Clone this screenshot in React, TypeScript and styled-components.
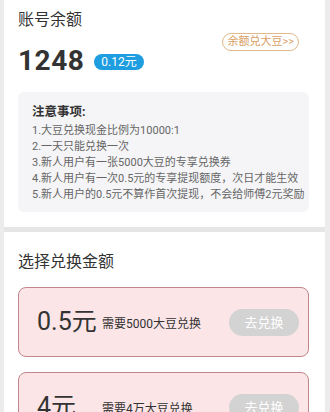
import styled, { createGlobalStyle } from "styled-components";

const GlobalStyle = createGlobalStyle`
  html, body {
    margin: 0;
    padding: 0;
    height: 412px;
    overflow: hidden;
    background: #ececec;
    font-family: Roboto, "Noto Sans CJK SC", sans-serif;
  }
`;

const notes = [
  "1.大豆兑换现金比例为10000:1",
  "2.一天只能兑换一次",
  "3.新人用户有一张5000大豆的专享兑换券",
  "4.新人用户有一次0.5元的专享提现额度，次日才能生效",
  "5.新人用户的0.5元不算作首次提现，不会给师傅2元奖励",
];

const options = [
  { amount: "0.5元", need: "需要5000大豆兑换" },
  { amount: "4元", need: "需要4万大豆兑换" },
];

const App = () => {
  return (
    <>
      <GlobalStyle />
      <Page>
        <Panel>
          <Title>账号余额</Title>
          <BalanceRow>
            <Balance>1248</Balance>
            <Badge>0.12元</Badge>
            <SwapLink>余额兑大豆&gt;&gt;</SwapLink>
          </BalanceRow>
          <NoteBox>
            <NoteTitle>注意事项:</NoteTitle>
            {notes.map((n) => (
              <NoteLine key={n}>{n}</NoteLine>
            ))}
          </NoteBox>
        </Panel>
        <Divider />
        <Panel>
          <SectionTitle>选择兑换金额</SectionTitle>
          <OptionList>
            {options.map((o) => (
              <OptionCard key={o.amount}>
                <Amount>{o.amount}</Amount>
                <Need>{o.need}</Need>
                <Spacer />
                <ExchangeBtn>去兑换</ExchangeBtn>
              </OptionCard>
            ))}
          </OptionList>
        </Panel>
      </Page>
    </>
  );
};

const Page = styled.div`
  margin: 0 5px 0 4px;
  min-height: 412px;
  background: #fff;
`;

const Panel = styled.div`
  background: #fff;
  padding: 8px 16px 0 14px;
`;

const Title = styled.div`
  font-size: 16px;
  line-height: 24px;
  color: #333;
`;

const BalanceRow = styled.div`
  display: flex;
  align-items: center;
  margin-top: 14px;
  position: relative;
`;

const Balance = styled.div`
  font-size: 28px;
  font-weight: 700;
  color: #333;
  line-height: 30px;
  letter-spacing: 0.5px;
`;

const Badge = styled.div`
  margin-left: 10px;
  background: #1e9de0;
  color: #fff;
  font-size: 12px;
  line-height: 16px;
  padding: 0 7px;
  border-radius: 9px;
  margin-top: 1px;
`;

const Spacer = styled.div`
  flex: 1;
`;

const SwapLink = styled.div`
  position: absolute;
  right: 10px;
  top: -13px;
  border: 1px solid #e2b98a;
  color: #d9a066;
  font-size: 11px;
  line-height: 16px;
  padding: 0 4px;
  border-radius: 10px;
`;

const NoteBox = styled.div`
  margin-top: 16px;
  margin-bottom: 15px;
  background: #f5f5f7;
  border-radius: 6px;
  padding: 10px 14px 9px;
  display: flex;
  flex-direction: column;
`;

const NoteTitle = styled.div`
  font-size: 12.5px;
  font-weight: 700;
  color: #333;
  line-height: 19px;
  margin-bottom: 2px;
`;

const NoteLine = styled.div`
  font-size: 11px;
  color: #666;
  line-height: 16px;
  white-space: nowrap;
`;

const Divider = styled.div`
  height: 5px;
  background: #e6e6e6;
`;

const SectionTitle = styled.div`
  font-size: 16px;
  line-height: 24px;
  color: #333;
  margin-top: 10px;
`;

const OptionList = styled.div`
  display: flex;
  flex-direction: column;
  gap: 15px;
  margin-top: 13px;
`;

const OptionCard = styled.div`
  display: flex;
  align-items: center;
  height: 70px;
  box-sizing: border-box;
  background: #fbe5e7;
  border: 1px solid #c0868c;
  border-radius: 8px;
  padding: 0 9px 0 18px;
`;

const Amount = styled.div`
  min-width: 61px;
  font-size: 25px;
  color: #333;
  line-height: 30px;
`;

const Need = styled.div`
  margin-left: 4px;
  font-size: 12px;
  color: #333;
`;

const ExchangeBtn = styled.div`
  width: 70px;
  height: 27px;
  border-radius: 14px;
  background: #d3d3d3;
  color: #fff;
  font-size: 13px;
  line-height: 27px;
  text-align: center;
`;

export default App;
